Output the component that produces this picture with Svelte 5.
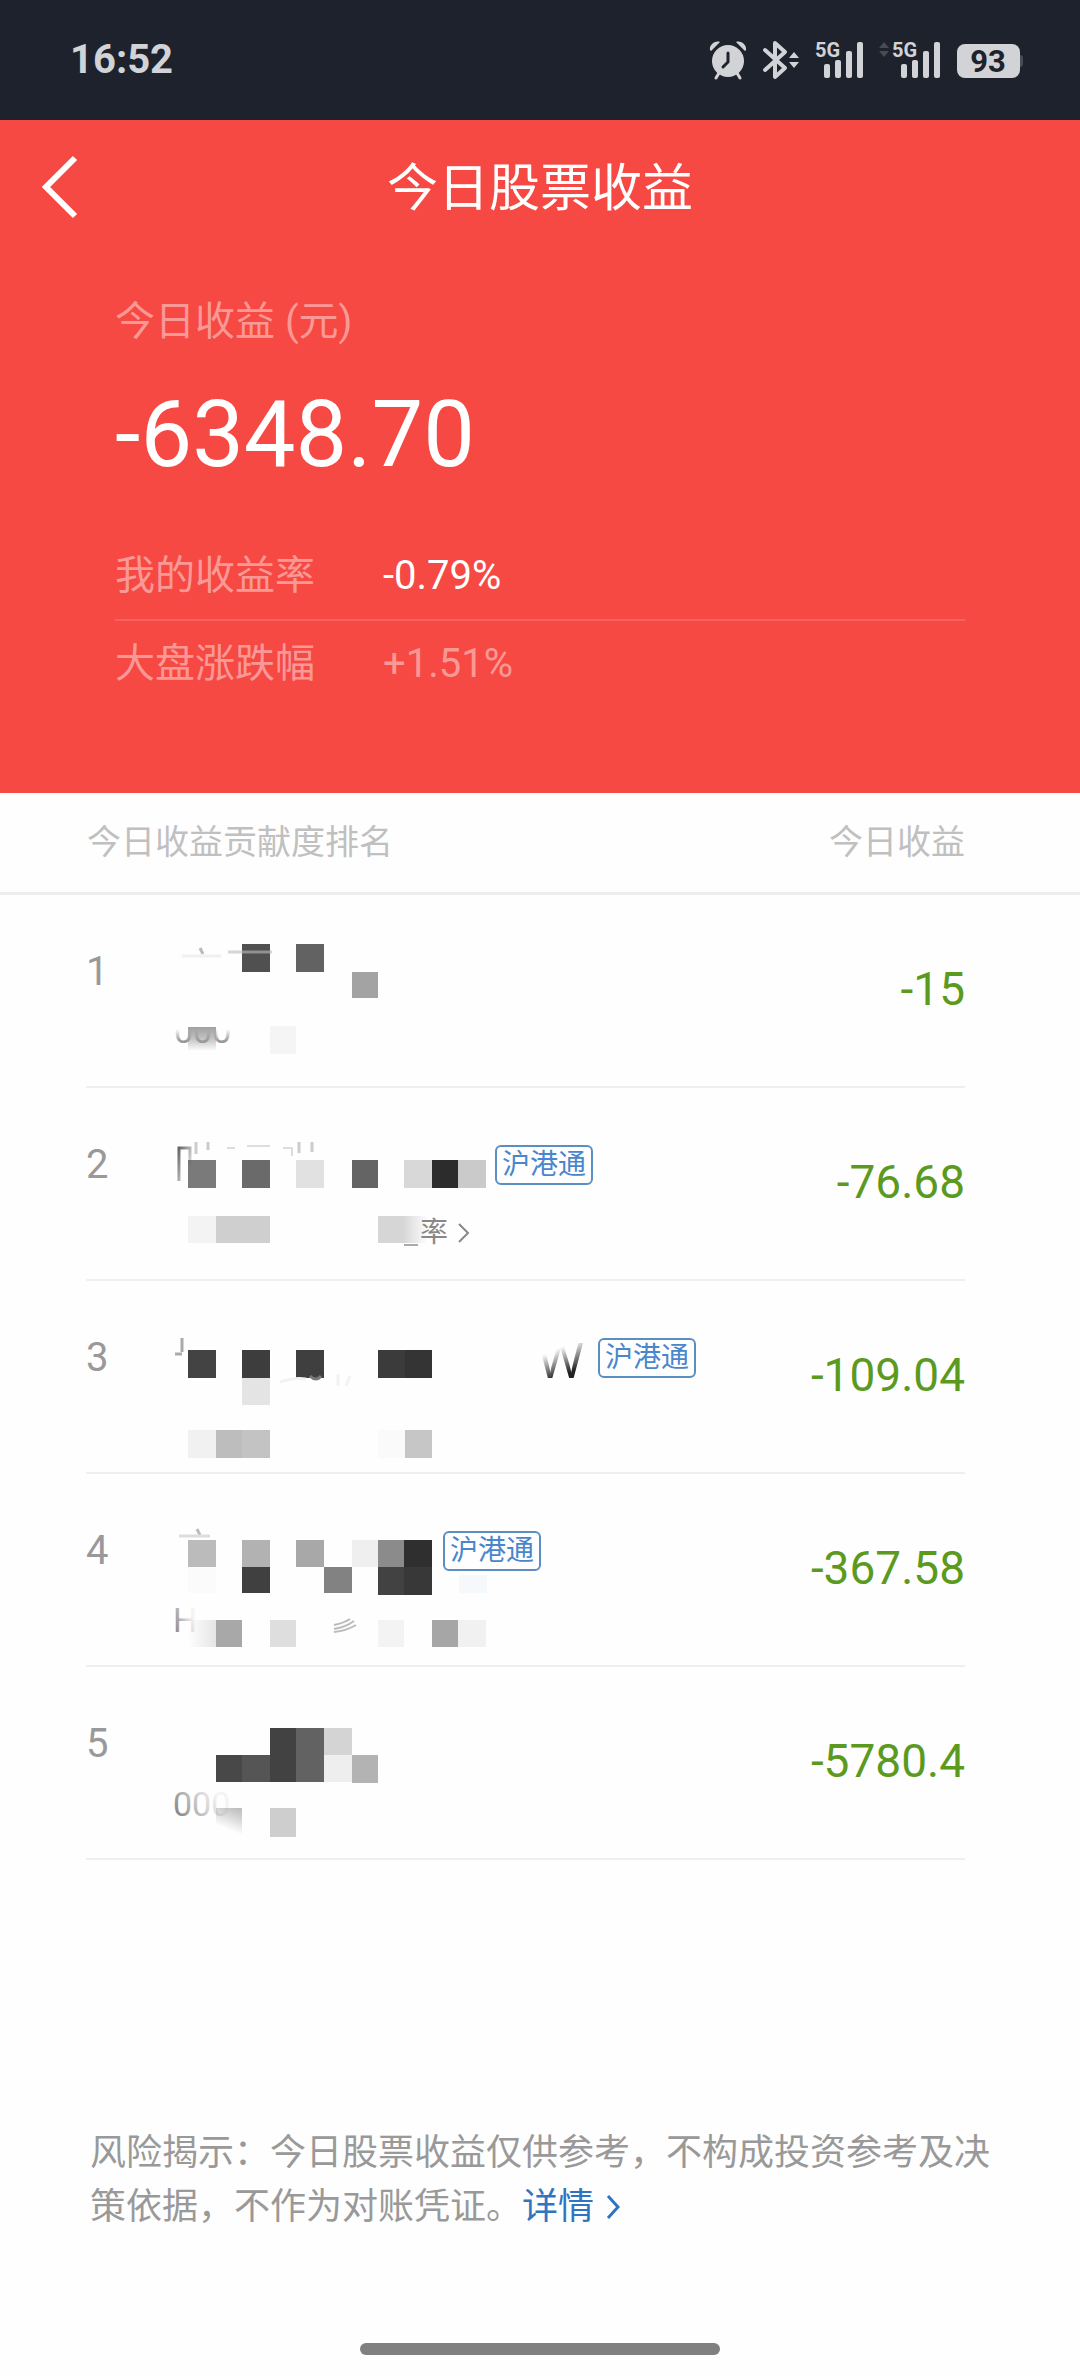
<script lang="ts">
  type Cell = [x: number, y: number, w: number, h: number, fill: string];

  interface Holding {
    rank: number;
    amount: string;
    nameWidth: number;
    name: Cell[];
    code: Cell[];
    connect?: boolean; // tradable through Stock Connect
    ratio?: boolean;
  }

  const summary = {
    total: '-6348.70',
    mine: '-0.79%',
    market: '+1.51%'
  };

  // Names and codes are hidden behind mosaic cells
  const holdings: Holding[] = [
    {
      rank: 1,
      amount: '-15',
      nameWidth: 240,
      name: [
        [72, 14, 28, 28, '#505050'],
        [126, 14, 28, 28, '#626262'],
        [182, 42, 26, 26, '#a3a3a3']
      ],
      code: [
        [18, 13, 28, 24, 'url(#fade-down)'],
        [100, 12, 26, 28, '#f5f5f5']
      ]
    },
    {
      rank: 2,
      amount: '-76.68',
      nameWidth: 325,
      connect: true,
      ratio: true,
      name: [
        [18, 37, 28, 28, '#7a7a7a'],
        [72, 37, 28, 28, '#6a6a6a'],
        [126, 37, 28, 28, '#e1e1e1'],
        [182, 37, 26, 28, '#646464'],
        [234, 37, 28, 28, '#d8d8d8'],
        [262, 37, 26, 28, '#2c2c2c'],
        [288, 37, 28, 28, '#cacaca']
      ],
      code: [
        [18, 9, 28, 27, '#f3f3f3'],
        [46, 9, 54, 27, '#cfcfcf'],
        [208, 9, 50, 27, 'url(#fade-right)']
      ]
    },
    {
      rank: 3,
      amount: '-109.04',
      nameWidth: 428,
      connect: true,
      name: [
        [18, 34, 28, 28, '#434343'],
        [72, 34, 28, 28, '#3d3d3d'],
        [126, 34, 28, 28, '#3f3f3f'],
        [208, 34, 27, 28, '#3b3b3b'],
        [235, 34, 27, 28, '#343434'],
        [72, 62, 28, 27, '#e4e4e4']
      ],
      code: [
        [18, 30, 28, 28, '#f1f1f1'],
        [46, 30, 26, 28, '#bdbdbd'],
        [72, 30, 28, 28, '#c3c3c3'],
        [208, 30, 27, 28, '#fafafa'],
        [235, 30, 27, 28, '#c6c6c6']
      ]
    },
    {
      rank: 4,
      amount: '-367.58',
      nameWidth: 273,
      connect: true,
      name: [
        [18, 31, 28, 27, '#bbbbbb'],
        [72, 31, 28, 27, '#b2b2b2'],
        [126, 31, 28, 27, '#a8a8a8'],
        [182, 31, 26, 27, '#efefef'],
        [208, 31, 26, 27, '#8b8b8b'],
        [234, 31, 28, 27, '#2f2f2f'],
        [18, 58, 28, 26, '#fbfbfb'],
        [72, 58, 28, 26, '#404040'],
        [154, 58, 28, 26, '#828282'],
        [208, 58, 26, 28, '#424242'],
        [234, 58, 28, 28, '#383838'],
        [289, 66, 28, 18, '#f6f9fc']
      ],
      code: [
        [18, 27, 28, 27, 'url(#fade-left)'],
        [46, 27, 26, 27, '#a8a8a8'],
        [100, 27, 26, 27, '#dedede'],
        [208, 27, 26, 27, '#f3f3f3'],
        [262, 27, 26, 27, '#a6a6a6'],
        [288, 27, 28, 27, '#f1f1f1']
      ]
    },
    {
      rank: 5,
      amount: '-5780.4',
      nameWidth: 240,
      name: [
        [100, 26, 26, 54, '#424242'],
        [126, 26, 28, 54, '#626262'],
        [154, 26, 28, 27, '#d4d4d4'],
        [46, 53, 26, 27, '#484848'],
        [72, 53, 28, 27, '#555555'],
        [154, 53, 28, 27, '#eeeeee'],
        [182, 53, 26, 28, '#b3b3b3']
      ],
      code: [
        [46, 22, 26, 26, 'url(#fade-corner)'],
        [100, 22, 26, 29, '#cecece']
      ]
    }
  ];
</script>

{#snippet cells(list: Cell[])}
  {#each list as [x, y, w, h, fill]}
    <rect {x} {y} width={w} height={h} {fill} />
  {/each}
{/snippet}

{#snippet bars(x: number)}
  <rect {x} y="23" width="6" height="14" rx="2" />
  <rect x={x + 11} y="19" width="6" height="18" rx="2" />
  <rect x={x + 22} y="10" width="6" height="27" rx="2" />
  <rect x={x + 33} y="1" width="6" height="36" rx="2" />
{/snippet}

<!-- shared gradients for half-erased text and cells -->
<svg class="defs" width="0" height="0" aria-hidden="true">
  <defs>
    <linearGradient id="fade-down" x1="0" y1="0" x2="0" y2="1">
      <stop offset="0" stop-color="#a0a0a0" />
      <stop offset="0.5" stop-color="#c4c4c4" />
      <stop offset="1" stop-color="#fefefe" />
    </linearGradient>
    <linearGradient id="fade-right" x1="0" y1="0" x2="1" y2="0">
      <stop offset="0.5" stop-color="#d6d6d6" />
      <stop offset="1" stop-color="#fefefe" />
    </linearGradient>
    <linearGradient id="fade-left" x1="0" y1="0" x2="1" y2="0">
      <stop offset="0" stop-color="#fefefe" />
      <stop offset="1" stop-color="#e6e6e6" />
    </linearGradient>
    <linearGradient id="fade-corner" x1="0.7" y1="0" x2="0.3" y2="1">
      <stop offset="0" stop-color="#c0c0c0" />
      <stop offset="0.8" stop-color="#fefefe" />
    </linearGradient>
    <linearGradient id="ink-bottom" x1="0" y1="0" x2="0" y2="1">
      <stop offset="0.45" stop-color="#999" stop-opacity="0" />
      <stop offset="0.75" stop-color="#999" />
    </linearGradient>
    <linearGradient id="ink-left" x1="0" y1="0.7" x2="1" y2="0.3">
      <stop offset="0" stop-color="#808080" />
      <stop offset="0.8" stop-color="#999" stop-opacity="0.1" />
    </linearGradient>
    <linearGradient id="ink-dark" x1="0.3" y1="0" x2="0.6" y2="1">
      <stop offset="0.35" stop-color="#222" stop-opacity="0" />
      <stop offset="0.75" stop-color="#222" />
    </linearGradient>
    <linearGradient id="ink-top" x1="0" y1="0" x2="1" y2="1">
      <stop offset="0" stop-color="#666" />
      <stop offset="1" stop-color="#666" stop-opacity="0" />
    </linearGradient>
  </defs>
</svg>

<div class="status">
  <time>16:52</time>
  <div class="icons">
    <svg width="38" height="38" viewBox="0 0 38 38">
      <circle cx="19" cy="20" r="16" />
      <path d="M1 9C0 4 6-1 11 1L2 10ZM37 9C38 4 32-1 27 1L36 10Z" />
      <path class="line" d="M10 32L7 37M28 32L31 37" />
      <path class="cut" d="M19 12V21L14 26" />
    </svg>
    <svg width="36" height="38" viewBox="0 0 36 38">
      <path class="line thick" d="M2 9L22 27L12 36V2L22 11L2 29" />
      <path d="M31 11L36 17H26ZM31 27L26 21H36Z" />
    </svg>
    <svg width="48" height="38" viewBox="0 0 48 38">
      <text class="net" x="0" y="16">5G</text>
      {@render bars(9)}
    </svg>
    <svg width="62" height="38" viewBox="0 0 62 38">
      <path class="dim" d="M5 1L10 7H0ZM5 16L0 10H10Z" />
      <text class="net" x="13" y="16">5G</text>
      {@render bars(22)}
    </svg>
    <svg width="66" height="38" viewBox="0 0 66 38">
      <rect class="dim" x="58" y="14" width="8" height="12" rx="3" />
      <rect x="0" y="3" width="63" height="34" rx="8" />
      <text class="level" x="31" y="31" text-anchor="middle">93</text>
    </svg>
  </div>
</div>

<header>
  <nav>
    <button class="back" aria-label="返回">
      <svg width="40" height="64" viewBox="0 0 40 64">
        <path d="M36 3L7 32L36 61" />
      </svg>
    </button>
    <h1>今日股票收益</h1>
  </nav>

  <div class="summary">
    <p class="label">今日收益 (元)</p>
    <p class="total">{summary.total}</p>
    <dl>
      <div class="rate">
        <dt>我的收益率</dt>
        <dd class="strong">{summary.mine}</dd>
      </div>
      <div class="rate">
        <dt>大盘涨跌幅</dt>
        <dd>{summary.market}</dd>
      </div>
    </dl>
  </div>
</header>

<main>
  <table>
    <thead>
      <tr>
        <th scope="col">今日收益贡献度排名</th>
        <th scope="col">今日收益</th>
      </tr>
    </thead>
    <tbody>
      {#each holdings as item (item.rank)}
        <tr>
          <td class="rank">{item.rank}</td>
          <td class="stock">
            <div class="name">
              <svg width={item.nameWidth} height="84">
                {@render cells(item.name)}
                {#if item.rank === 1}
                  <path d="M58 22H102" stroke="#bbb" stroke-opacity="0.6" stroke-width="3" />
                  <path d="M30 18L33 24" stroke="#bbb" stroke-width="3" />
                  <path d="M12 26H51" stroke="#f0f0f0" stroke-width="3" />
                {:else if item.rank === 2}
                  <path d="M9 58V25H20V42" fill="none" stroke="url(#ink-top)" stroke-width="3" />
                  <path d="M26 19V31M38 19V27M129 19V30M142 19V29" stroke="#ccc" stroke-width="3" />
                  <path d="M77 23H100M113 25H122V33M57 25H65" fill="none" stroke="#ddd" stroke-width="2" />
                {:else if item.rank === 3}
                  <path d="M12 22V36M5 38H12" stroke="#aaa" stroke-width="3" />
                  <path d="M110 66Q124 61 136 63M168 58V70M180 60L176 70" fill="none" stroke="#f2f2f2" stroke-width="3" />
                  <path d="M140 60Q146 66 151 60" fill="none" stroke="#777" stroke-width="3" />
                  <text class="letter" x="368" y="62" fill="url(#ink-dark)">W</text>
                {:else if item.rank === 4}
                  <path d="M27 20L30 26" stroke="#bbb" stroke-width="3" />
                  <path d="M9 27H40" stroke="#ddd" stroke-width="3" />
                {/if}
              </svg>
              {#if item.connect}
                <span class="badge">沪港通</span>
              {/if}
            </div>
            <div class="code">
              <svg width="250" height="52">
                {@render cells(item.code)}
                {#if item.rank === 1}
                  <text x="4" y="29" fill="url(#ink-bottom)">000</text>
                {:else if item.rank === 2}
                  <path d="M234 38H248" stroke="#aaa" stroke-width="2" />
                {:else if item.rank === 4}
                  <text x="3" y="39" fill="url(#ink-left)">H</text>
                  <path d="M164 32Q174 30 180 26M164 36Q176 34 184 28M164 39Q176 38 186 32" fill="none" stroke="#bbb" stroke-width="2" />
                {:else if item.rank === 5}
                  <text x="3" y="30" fill="url(#ink-left)">000</text>
                {/if}
              </svg>
              {#if item.ratio}
                <span>率</span>
                <svg class="more" width="14" height="24" viewBox="0 0 14 24">
                  <path d="M3 3L12 12L3 21" />
                </svg>
              {/if}
            </div>
          </td>
          <td class="amount">{item.amount}</td>
        </tr>
      {/each}
    </tbody>
  </table>
</main>

<footer>
  <p>
    风险揭示：今日股票收益仅供参考，不构成投资参考及决策依据，不作为对账凭证。<a href="#detail">详情<svg width="14" height="28" viewBox="0 0 14 28"><path d="M2 3L12 14L2 25" /></svg></a>
  </p>
  <div class="home"></div>
</footer>

<style>
  :global(body) {
    background: #fefefe;
    font-family: Roboto, "Noto Sans CJK SC", sans-serif;
  }

  p, h1, dl, dd {
    margin: 0;
    font-weight: 400;
  }

  .defs {
    position: absolute;
  }

  .status {
    display: flex;
    justify-content: space-between;
    align-items: center;
    height: 120px;
    padding: 0 57px 0 70px;
    box-sizing: border-box;
    background: #1e222c;
    color: #d2d3d6;
    & time {
      font-size: 40px;
      font-weight: 700;
      line-height: 48px;
    }
    & .icons {
      display: flex;
      gap: 16px;
      fill: #d2d3d6;
    }
    & svg {
      overflow: visible;
    }
    & .line {
      fill: none;
      stroke: #d2d3d6;
      stroke-width: 3;
      stroke-linecap: round;
    }
    & .thick {
      stroke-width: 4;
      stroke-linejoin: round;
    }
    & .cut {
      fill: none;
      stroke: #1e222c;
      stroke-width: 3;
      stroke-linecap: round;
    }
    & .dim {
      fill: #474b54;
    }
    & .net {
      font-size: 20px;
      font-weight: 700;
    }
    & .level {
      fill: #1e222c;
      font-size: 31px;
      font-weight: 700;
    }
  }

  header {
    background: #f64943;
    color: #fff;
    padding-bottom: 86px;
  }

  nav {
    display: grid;
    grid-template-columns: 120px 1fr 120px;
    align-items: center;
    height: 134px;
    & h1 {
      padding-top: 4px;
      font-size: 51px;
      line-height: 64px;
      text-align: center;
    }
  }

  .back {
    display: flex;
    padding: 0 0 0 39px;
    border: 0;
    background: none;
    cursor: pointer;
    & path {
      fill: none;
      stroke: #fff;
      stroke-width: 6;
    }
  }

  .summary {
    padding: 40px 115px 0;
    color: rgba(255, 255, 255, 0.45);
    font-size: 40px;
    & .label {
      line-height: 56px;
    }
    & .total {
      margin-top: 35px;
      color: #fff;
      font-size: 92px;
      line-height: 100px;
    }
    & dl {
      margin-top: 48px;
    }
  }

  .rate {
    display: flex;
    line-height: 86px;
    & + .rate {
      border-top: 2px solid rgba(255, 255, 255, 0.15);
    }
    & dt {
      width: 268px;
    }
    & .strong {
      color: #fff;
    }
  }

  table, tbody, thead {
    display: block;
  }

  thead tr {
    display: flex;
    justify-content: space-between;
    padding: 0 115px 0 87px;
    border-bottom: 3px solid #ededed;
  }

  th {
    padding: 0;
    color: #c0c0c0;
    font-size: 34px;
    font-weight: 400;
    line-height: 99px;
  }

  tbody tr {
    display: flex;
    height: 193px;
    margin: 0 115px 0 86px;
    box-sizing: border-box;
    border-bottom: 2px solid #efefef;
  }

  td {
    padding: 0;
  }

  .rank {
    width: 84px;
    padding-top: 35px;
    color: #999;
    font-size: 40px;
    line-height: 84px;
  }

  .stock {
    flex: 1;
    padding-top: 35px;
    & svg {
      overflow: visible;
    }
  }

  .name {
    display: flex;
    align-items: center;
    height: 84px;
    & .letter {
      font-family: "Noto Sans", sans-serif;
      font-size: 49px;
    }
  }

  .badge {
    padding: 0 5px;
    border: 2px solid #5b8fc4;
    border-radius: 6px;
    color: #4a86cc;
    font-size: 28px;
    line-height: 36px;
  }

  .code {
    display: flex;
    align-items: center;
    height: 52px;
    color: #888;
    font-size: 28px;
    line-height: 52px;
    & text {
      font-size: 34px;
    }
    & .more {
      margin-left: 8px;
      fill: none;
      stroke: #888;
      stroke-width: 2;
    }
  }

  .amount {
    align-self: center;
    color: #5c9a1f;
    font-size: 46px;
    line-height: 56px;
    padding-bottom: 4px;
  }

  footer {
    padding: 266px 0 21px;
    & p {
      padding: 0 88px 0 90px;
      color: #999;
      font-size: 36px;
      line-height: 54px;
    }
    & a {
      color: #2f74c0;
      text-decoration: none;
    }
    & svg {
      margin-left: 12px;
      vertical-align: -2px;
      fill: none;
      stroke: #2f74c0;
      stroke-width: 3;
    }
  }

  .home {
    width: 33.333%;
    height: 12px;
    margin: 109px auto 0;
    border-radius: 6px;
    background: #808080;
  }
</style>
